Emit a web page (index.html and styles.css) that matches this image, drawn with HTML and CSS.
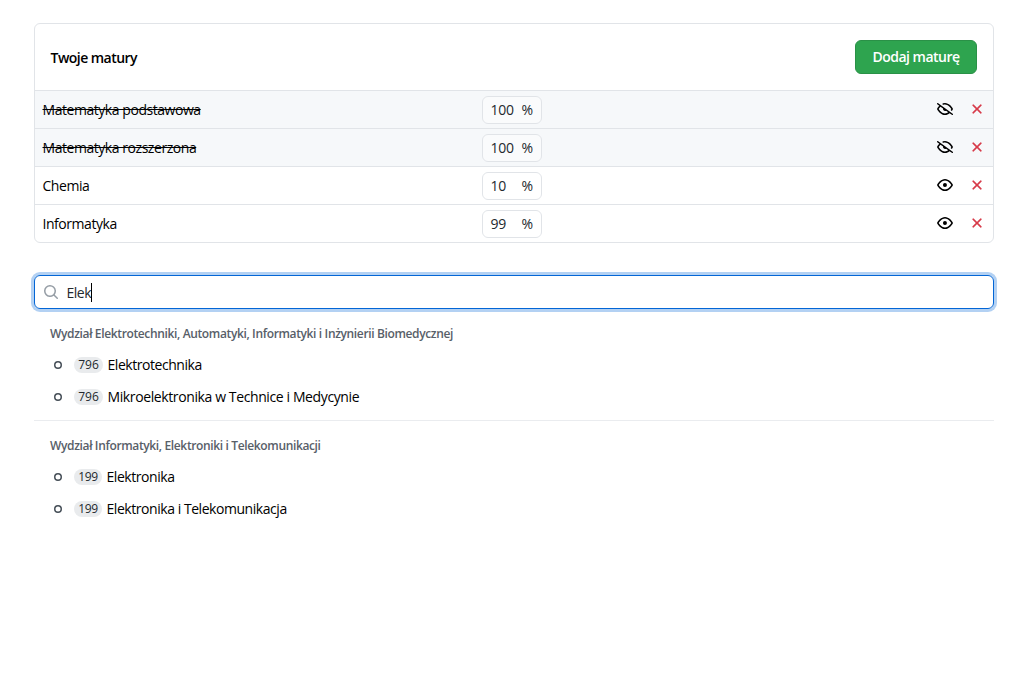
FILE: index.html
```html
<!DOCTYPE html>
<html lang="pl">
<head>
<meta charset="utf-8">
<title>Twoje matury</title>
<link rel="stylesheet" href="styles.css">
</head>
<body>
<svg class="sprite" aria-hidden="true">
  <symbol id="x" viewBox="0 0 16 16"><path d="M3.72 3.72a.75.75 0 0 1 1.06 0L8 6.94l3.22-3.22a.749.749 0 0 1 1.275.326.749.749 0 0 1-.215.734L9.06 8l3.22 3.22a.749.749 0 0 1-.326 1.275.749.749 0 0 1-.734-.215L8 9.06l-3.22 3.22a.751.751 0 0 1-1.042-.018.751.751 0 0 1-.018-1.042L6.94 8 3.72 4.78a.75.75 0 0 1 0-1.06Z"/></symbol>
  <symbol id="eye" viewBox="0 0 16 16"><path d="M8 2c1.981 0 3.671.992 4.933 2.078 1.27 1.091 2.187 2.345 2.637 3.023a1.62 1.62 0 0 1 0 1.798c-.45.678-1.367 1.932-2.637 3.023C11.67 13.008 9.981 14 8 14s-3.671-.992-4.933-2.078C1.797 10.83.88 9.576.43 8.898a1.62 1.62 0 0 1 0-1.798c.45-.677 1.367-1.931 2.637-3.022C4.33 2.992 6.019 2 8 2ZM1.679 7.932a.12.12 0 0 0 0 .136c.411.622 1.241 1.75 2.366 2.717C5.176 11.758 6.527 12.5 8 12.5s2.825-.742 3.955-1.715c1.124-.967 1.954-2.096 2.366-2.717a.12.12 0 0 0 0-.136c-.412-.621-1.242-1.75-2.366-2.717C10.824 4.242 9.473 3.5 8 3.5s-2.824.742-3.955 1.715c-1.124.967-1.954 2.096-2.366 2.717ZM8 10a2 2 0 1 1-.001-3.999A2 2 0 0 1 8 10Z"/></symbol>
  <symbol id="eye-closed" viewBox="0 0 16 16"><path d="M.143 2.31a.75.75 0 0 1 1.047-.167l14.5 10.5a.75.75 0 1 1-.88 1.214l-2.248-1.628C11.346 13.19 9.792 14 8 14c-1.981 0-3.67-.992-4.933-2.078C1.797 10.832.88 9.577.43 8.9a1.619 1.619 0 0 1 0-1.797c.353-.533.995-1.42 1.868-2.305L.31 3.357A.75.75 0 0 1 .143 2.31Zm1.536 5.622A.12.12 0 0 0 1.657 8c0 .021.006.045.022.068.412.621 1.242 1.75 2.366 2.717C5.175 11.758 6.527 12.5 8 12.5c1.195 0 2.31-.488 3.29-1.191L9.063 9.695A2 2 0 0 1 6.058 7.52L3.529 5.688a14.207 14.207 0 0 0-1.85 2.244ZM8 3.5c-.516 0-1.017.09-1.499.251a.75.75 0 1 1-.473-1.423A6.207 6.207 0 0 1 8 2c1.981 0 3.67.992 4.933 2.078 1.27 1.091 2.187 2.345 2.637 3.023a1.62 1.62 0 0 1 0 1.798c-.11.166-.248.365-.41.587a.75.75 0 1 1-1.21-.887c.148-.201.272-.382.371-.53a.119.119 0 0 0 0-.137c-.412-.621-1.242-1.75-2.366-2.717C10.825 4.242 9.473 3.5 8 3.5Z"/></symbol>
  <symbol id="search" viewBox="0 0 16 16"><path d="M10.68 11.74a6 6 0 0 1-7.922-8.982 6 6 0 0 1 8.982 7.922l3.04 3.04a.749.749 0 0 1-.326 1.275.749.749 0 0 1-.734-.215ZM11.5 7a4.499 4.499 0 1 0-8.997 0A4.499 4.499 0 0 0 11.5 7Z"/></symbol>
  <symbol id="dot" viewBox="0 0 16 16"><path d="M4 8a4 4 0 1 1 8 0 4 4 0 0 1-8 0Zm4-2.5a2.5 2.5 0 1 0 0 5 2.5 2.5 0 0 0 0-5Z"/></symbol>
</svg>
<main class="page">
  <section class="card">
    <header class="card-header">
      <h1 class="card-title">Twoje matury</h1>
      <button class="add">Dodaj maturę</button>
    </header>
    <div class="row muted">
      <span class="subject"><s>Matematyka podstawowa</s></span>
      <span class="score"><span class="value">100</span><span>%</span></span>
      <span class="actions"><svg class="icon"><use href="#eye-closed"/></svg><svg class="icon remove"><use href="#x"/></svg></span>
    </div>
    <div class="row muted">
      <span class="subject"><s>Matematyka rozszerzona</s></span>
      <span class="score"><span class="value">100</span><span>%</span></span>
      <span class="actions"><svg class="icon"><use href="#eye-closed"/></svg><svg class="icon remove"><use href="#x"/></svg></span>
    </div>
    <div class="row">
      <span class="subject">Chemia</span>
      <span class="score"><span class="value">10</span><span>%</span></span>
      <span class="actions"><svg class="icon"><use href="#eye"/></svg><svg class="icon remove"><use href="#x"/></svg></span>
    </div>
    <div class="row">
      <span class="subject">Informatyka</span>
      <span class="score"><span class="value">99</span><span>%</span></span>
      <span class="actions"><svg class="icon"><use href="#eye"/></svg><svg class="icon remove"><use href="#x"/></svg></span>
    </div>
  </section>

  <div class="search">
    <svg class="icon search-icon"><use href="#search"/></svg>
    <span class="query">Elek</span><span class="caret"></span>
  </div>

  <section class="group">
    <h2 class="group-title">Wydział Elektrotechniki, Automatyki, Informatyki i Inżynierii Biomedycznej</h2>
    <div class="item"><svg class="icon dot"><use href="#dot"/></svg><span class="counter c796">796</span><span class="name">Elektrotechnika</span></div>
    <div class="item"><svg class="icon dot"><use href="#dot"/></svg><span class="counter c796">796</span><span class="name long">Mikroelektronika w Technice i Medycynie</span></div>
  </section>
  <section class="group divided">
    <h2 class="group-title">Wydział Informatyki, Elektroniki i Telekomunikacji</h2>
    <div class="item"><svg class="icon dot"><use href="#dot"/></svg><span class="counter c199">199</span><span class="name">Elektronika</span></div>
    <div class="item"><svg class="icon dot"><use href="#dot"/></svg><span class="counter c199">199</span><span class="name">Elektronika i Telekomunikacja</span></div>
  </section>
</main>
</body>
</html>
```

FILE: styles.css
```css
* { box-sizing: border-box; }
body {
  margin: 0;
  background: #fff;
  color: #000;
  font: 14px/20px "Segoe UI", "Open Sans", "Noto Sans", sans-serif;
}
.sprite { display: none; }
.icon { display: block; flex: none; width: 16px; height: 16px; fill: currentColor; }
.page { width: 960px; margin: 23px 0 0 34px; }

.card { border: 1px solid #e1e4e8; border-radius: 6px; overflow: hidden; }
.card-header { display: flex; align-items: center; justify-content: space-between; height: 66px; padding: 0 16px; }
.card-title { margin: 2px 0 0 -0.5px; font-size: 14px; line-height: 20px; font-weight: 600; letter-spacing: -0.53px; }
.add {
  width: 122px;
  height: 34px;
  padding: 0;
  border: 1px solid #2a9147;
  border-radius: 6px;
  background: #2ea44f;
  color: #fff;
  font: inherit;
  font-weight: 600;
  letter-spacing: -0.5px;
}
.row {
  display: grid;
  grid-template-columns: 439px 60px 1fr;
  align-items: start;
  height: 38px;
  padding: 5px 8px 0;
  border-top: 1px solid #e1e4e8;
}
.muted { background: #f6f8fa; }
.subject { padding-top: 4px; margin-left: -0.5px; letter-spacing: -0.45px; }
.score {
  display: flex;
  justify-content: space-between;
  height: 28px;
  padding: 3px 8px;
  border: 1px solid #e1e4e8;
  border-radius: 6px;
  background: #fafbfc;
  color: #24292e;
}
.value { letter-spacing: -0.3px; margin-left: -0.5px; }
.row:not(.muted) .score { background: #fff; }
.actions { display: flex; justify-content: flex-end; gap: 16px; padding-top: 5px; }
.remove { color: #d73a49; stroke: currentColor; stroke-width: 0.3px; }

.search {
  display: flex;
  align-items: center;
  height: 34px;
  margin-top: 32px;
  padding-left: 8px;
  border: 1px solid #0366d6;
  border-radius: 6px;
  box-shadow: 0 0 0 3px rgba(3, 102, 214, 0.3);
  color: #24292e;
}
.search-icon { margin-right: 8px; color: #959da5; }
.query { margin: 2px 0 0 -0.5px; letter-spacing: -0.5px; }
.caret { width: 1px; height: 19px; background: #000; }

.group { padding: 16px 16px 0; height: 111px; }
.divided { border-top: 1px solid #eaecef; }
.group-title { margin: 0; height: 24px; font-size: 12px; line-height: 18px; font-weight: 600; color: #586069; letter-spacing: -0.36px; }
.item { display: flex; align-items: center; height: 32px; }
.dot { margin-right: 8px; color: #444d56; }
.name { letter-spacing: -0.45px; margin-left: -0.5px; }
.long { letter-spacing: -0.39px; }
.counter {
  height: 16px;
  margin-right: 5px;
  border-radius: 8px;
  background: #e9ebed;
  color: #24292e;
  font-size: 12px;
  line-height: 16px;
  font-weight: 500;
  text-align: center;
}
.c796 { width: 29px; }
.c199 { width: 28px; letter-spacing: -0.4px; }
```
